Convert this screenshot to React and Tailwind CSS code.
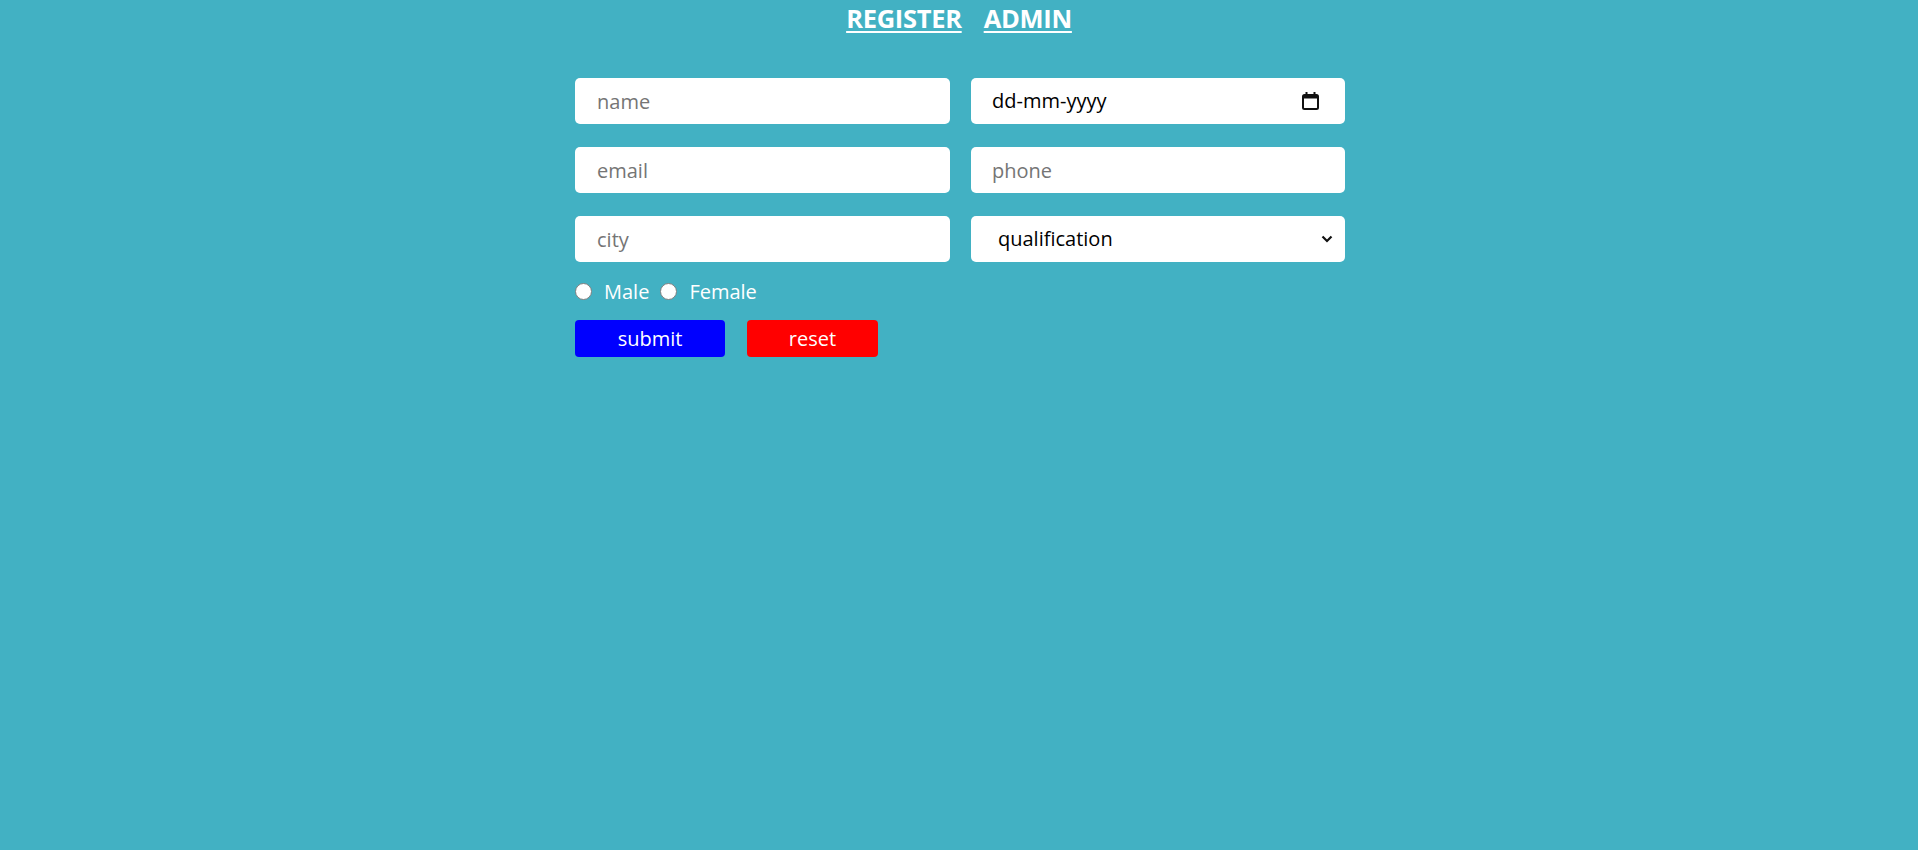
import React from "react";

function CalendarIcon() {
  return (
    <svg width="17" height="18" viewBox="0 0 17 18" fill="none">
      <rect x="1" y="3" width="15" height="14" rx="1.5" stroke="#111" strokeWidth="2" />
      <rect x="1" y="3" width="15" height="3.5" fill="#111" />
      <rect x="3.5" y="0" width="2" height="4" fill="#111" />
      <rect x="11.5" y="0" width="2" height="4" fill="#111" />
    </svg>
  );
}

function Radio({ label }) {
  return (
    <label className="flex items-center">
      <span className="w-[17px] h-[17px] rounded-full bg-white border border-[#808080] inline-block" />
      <span className="ml-[12px] text-white">{label}</span>
    </label>
  );
}

export default function App() {
  const font = { fontFamily: '"Open Sans", "Noto Sans", sans-serif' };
  return (
    <div className="min-h-[850px] w-full bg-[#42b1c3]" style={font}>
      <div className="flex justify-center gap-[22px] pt-[2px] h-[78px]">
        <a href="#" className="text-white font-bold text-[25.5px] leading-[32px] underline underline-offset-[3px] decoration-2 tracking-[-0.3px]">REGISTER</a>
        <a href="#" className="text-white font-bold text-[25.5px] leading-[32px] underline underline-offset-[3px] decoration-2 tracking-[-0.3px]">ADMIN</a>
      </div>
      <div className="pl-[2px]">
        <div className="w-[770px] mx-auto">
          <div className="grid grid-cols-[375px_374px] gap-x-[21px] gap-y-[23px]">
            <input placeholder="name" className="h-[46px] rounded-[5px] bg-white px-[22px] text-[20px] text-black placeholder:text-[#757575] outline-none" />
            <div className="h-[46px] rounded-[5px] bg-white pl-[21px] pr-[26px] flex items-center justify-between text-[20px] text-black">
              <span>dd-mm-yyyy</span>
              <CalendarIcon />
            </div>
            <input placeholder="email" className="h-[46px] rounded-[5px] bg-white px-[22px] text-[20px] text-black placeholder:text-[#757575] outline-none" />
            <input placeholder="phone" className="h-[46px] rounded-[5px] bg-white px-[21px] text-[20px] text-black placeholder:text-[#757575] outline-none" />
            <input placeholder="city" className="h-[46px] rounded-[5px] bg-white px-[22px] text-[20px] text-black placeholder:text-[#757575] outline-none" />
            <div className="h-[46px] rounded-[5px] bg-white pl-[27px] pr-[12px] flex items-center justify-between text-[20px] text-black">
              <span>qualification</span>
              <svg width="12" height="8" viewBox="0 0 12 8" fill="none">
                <path d="M1.5 1.5 L6 6 L10.5 1.5" stroke="#111" strokeWidth="2.2" />
              </svg>
            </div>
          </div>
          <div className="flex items-center gap-[11px] mt-[21px] text-[20px] h-[17px]">
            <Radio label="Male" />
            <Radio label="Female" />
          </div>
          <div className="flex gap-[22px] mt-[20px]">
            <button className="w-[150px] h-[37px] rounded-[4px] bg-[#0000ff] text-white text-[20px]">submit</button>
            <button className="w-[131px] h-[37px] rounded-[4px] bg-[#ff0000] text-white text-[20px]">reset</button>
          </div>
        </div>
      </div>
    </div>
  );
}
